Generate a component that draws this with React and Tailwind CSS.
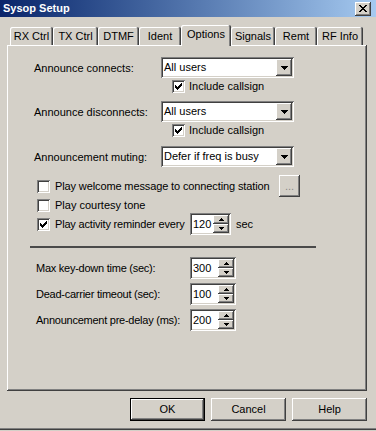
import React from "react";

// classic 3D edges
const raised =
  "shadow-[inset_-1px_-1px_0_#404040,inset_1px_1px_0_#ffffff,inset_-2px_-2px_0_#808080]";
const sunken =
  "shadow-[inset_1px_1px_0_#808080,inset_-1px_-1px_0_#ffffff,inset_2px_2px_0_#404040,inset_-2px_-2px_0_#d4d0c8]";

const CheckMark = () => (
  <svg width="7" height="7" viewBox="0 0 7 7" shapeRendering="crispEdges">
    <path
      fill="#000"
      d="M6 0h1v1H6z M5 1h2v1H5z M0 2h1v1H0z M4 2h3v1H4z M0 3h2v1H0z M3 3h3v1H3z M0 4h5v1H0z M1 5h3v1H1z M2 6h1v1H2z"
    />
  </svg>
);

const DownArrow = () => (
  <svg width="7" height="4" viewBox="0 0 7 4" shapeRendering="crispEdges">
    <path fill="#000" d="M0 0h7v1H0z M1 1h5v1H1z M2 2h3v1H2z M3 3h1v1H3z" />
  </svg>
);

const SmallArrow = ({ up }) => (
  <svg width="5" height="3" viewBox="0 0 5 3" shapeRendering="crispEdges">
    {up ? (
      <path fill="#000" d="M2 0h1v1H2z M1 1h3v1H1z M0 2h5v1H0z" />
    ) : (
      <path fill="#000" d="M0 0h5v1H0z M1 1h3v1H1z M2 2h1v1H2z" />
    )}
  </svg>
);

const Checkbox = ({ checked }) => (
  <div className={`w-[13px] h-[13px] shrink-0 bg-white flex items-center justify-center ${sunken}`}>
    {checked && <CheckMark />}
  </div>
);

const Combo = ({ value }) => (
  <div className={`flex w-[133px] h-[21px] p-[2px] bg-white ${sunken}`}>
    <span className="flex-1 pl-[1px] leading-[17px] whitespace-nowrap">{value}</span>
    <div className={`w-[16px] h-[17px] bg-[#d4d0c8] flex items-center justify-center ${raised}`}>
      <DownArrow />
    </div>
  </div>
);

const Spin = ({ value, wide }) => (
  <div className={`flex ${wide ? "w-[46px]" : "w-[41px]"} h-[22px] p-[2px] bg-white ${sunken}`}>
    <span className="flex-1 pl-[1px] leading-[18px]">{value}</span>
    <div className="flex flex-col w-[16px]">
      <div className={`h-[9px] bg-[#d4d0c8] flex items-center justify-center ${raised}`}>
        <SmallArrow up />
      </div>
      <div className={`h-[9px] bg-[#d4d0c8] flex items-center justify-center ${raised}`}>
        <SmallArrow />
      </div>
    </div>
  </div>
);

const Tab = ({ label, className }) => (
  <div
    className={`h-[18px] bg-[#d4d0c8] rounded-t-[2px] flex items-center justify-center leading-none shadow-[inset_-1px_0_0_#404040,inset_1px_1px_0_#ffffff,inset_-2px_0_0_#808080] ${className}`}
  >
    {label}
  </div>
);

const ComboRow = ({ label, value }) => (
  <div className="flex items-center h-[21px]">
    <span className="w-[127px] mt-[2px] whitespace-nowrap">{label}</span>
    <Combo value={value} />
  </div>
);

const SpinRow = ({ label, value, className }) => (
  <div className={`flex items-center h-[22px] ${className}`}>
    <span className="ml-[2px] w-[154px] whitespace-nowrap tracking-[-0.25px]">{label}</span>
    <Spin value={value} wide />
  </div>
);

const Button = ({ label, isDefault }) => (
  <div
    className={`w-[75px] h-[23px] flex items-center justify-center bg-[#d4d0c8] ${
      isDefault
        ? "shadow-[inset_0_0_0_1px_#000000,inset_-2px_-2px_0_#404040,inset_2px_2px_0_#ffffff,inset_-3px_-3px_0_#808080]"
        : raised
    }`}
  >
    {label}
  </div>
);

export default function App() {
  return (
    <div className="w-[376px] h-[431px] overflow-hidden bg-[#d4d0c8] text-black text-[11px] font-['Liberation_Sans',Arial,sans-serif] flex flex-col">
      {/* title bar */}
      <div className="h-[17px] shrink-0 flex items-center justify-between pl-[3px] pr-[5px] bg-gradient-to-r from-[#0a246a] to-[#a6caf0]">
        <span className="text-white font-bold leading-none">Sysop Setup</span>
        <div className={`w-[16px] h-[14px] bg-[#d4d0c8] flex items-center justify-center ${raised}`}>
          <svg width="8" height="7" viewBox="0 0 8 7" shapeRendering="crispEdges">
            <path
              fill="#000"
              d="M0 0h2v1H0z M6 0h2v1H6z M1 1h2v1H1z M5 1h2v1H5z M2 2h4v1H2z M3 3h2v1H3z M2 4h4v1H2z M1 5h2v1H1z M5 5h2v1H5z M0 6h2v1H0z M6 6h2v1H6z"
            />
          </svg>
        </div>
      </div>

      {/* tabs */}
      <div className="mt-[8px] h-[20px] flex items-end pl-[10px]">
        <Tab label="RX Ctrl" className="w-[43px]" />
        <Tab label="TX Ctrl" className="w-[45px]" />
        <Tab label="DTMF" className="w-[41px]" />
        <Tab label="Ident" className="w-[42px]" />
        <div className="relative z-10 w-[50px] h-[21px] -mb-[1px] pb-[2px] bg-[#d4d0c8] rounded-t-[2px] flex items-center justify-center leading-none shadow-[inset_-1px_0_0_#404040,inset_1px_1px_0_#ffffff,inset_-2px_0_0_#808080]">
          Options
        </div>
        <Tab label="Signals" className="w-[44px]" />
        <Tab label="Remt" className="w-[42px]" />
        <Tab label="RF Info" className="w-[46px]" />
      </div>

      {/* panel */}
      <div className="ml-[7px] w-[360px] h-[346px] shrink-0 pt-[12px] pl-[27px] flex flex-col shadow-[inset_-1px_-1px_0_#404040,inset_1px_1px_0_#ffffff,inset_-2px_-2px_0_#808080]">
        <ComboRow label="Announce connects:" value="All users" />
        <div className="mt-[2px] ml-[138px] h-[13px] flex items-center">
          <Checkbox checked />
          <span className="ml-[4px] whitespace-nowrap">Include callsign</span>
        </div>

        <div className="mt-[8px]">
          <ComboRow label="Announce disconnects:" value="All users" />
        </div>
        <div className="mt-[2px] ml-[138px] h-[13px] flex items-center">
          <Checkbox checked />
          <span className="ml-[4px] whitespace-nowrap">Include callsign</span>
        </div>

        <div className="mt-[9px]">
          <ComboRow label="Announcement muting:" value="Defer if freq is busy" />
        </div>

        <div className="mt-[8px] ml-[3px] h-[22px] flex items-center">
          <Checkbox />
          <span className="ml-[5px] w-[224px] whitespace-nowrap tracking-[-0.12px]">
            Play welcome message to connecting station
          </span>
          <div className={`w-[21px] h-[22px] bg-[#d4d0c8] flex items-end justify-center pb-[5px] text-[#8a8a8a] leading-none ${raised}`}>
            ...
          </div>
        </div>

        <div className="mt-[2px] ml-[3px] h-[13px] flex items-center">
          <Checkbox />
          <span className="ml-[5px] whitespace-nowrap">Play courtesy tone</span>
        </div>

        <div className="mt-[1px] ml-[3px] h-[22px] flex items-center">
          <Checkbox checked />
          <span className="ml-[5px] w-[135px] whitespace-nowrap tracking-[-0.18px]">Play activity reminder every</span>
          <Spin value="120" />
          <span className="ml-[5px]">sec</span>
        </div>

        <div className="mt-[11px] -ml-[4px] w-[286px] h-[2px] bg-[#4a4a4a]" />

        <SpinRow label="Max key-down time (sec):" value="300" className="mt-[9px]" />
        <SpinRow label="Dead-carrier timeout (sec):" value="100" className="mt-[4px]" />
        <SpinRow label="Announcement pre-delay (ms):" value="200" className="mt-[4px]" />
      </div>

      {/* buttons */}
      <div className="mt-[7px] h-[23px] flex gap-[6px] pl-[130px]">
        <Button label="OK" isDefault />
        <Button label="Cancel" />
        <Button label="Help" />
      </div>

      <div className="mt-[7px] h-[1px] bg-[#808080]" />
      <div className="h-[1px] bg-[#404040]" />
    </div>
  );
}
